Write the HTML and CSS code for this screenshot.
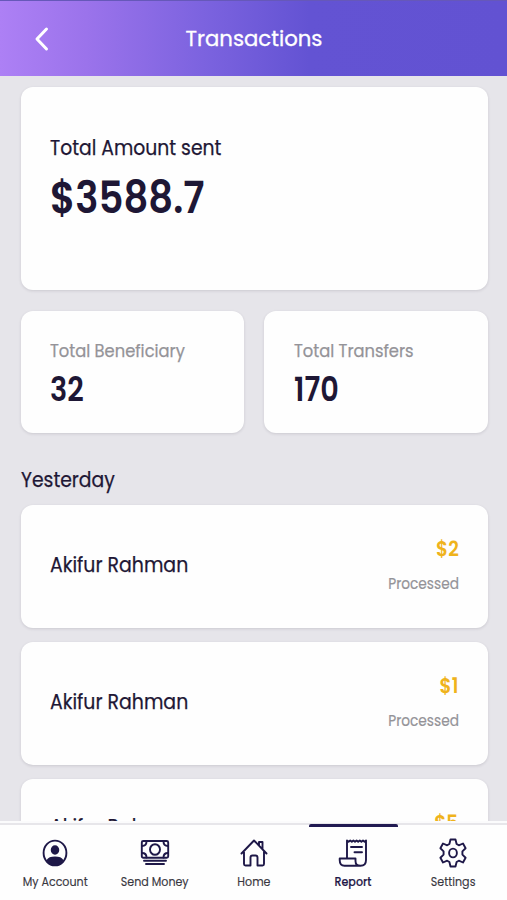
FILE: index.html
```html
<!DOCTYPE html>
<html lang="en">
<head>
  <meta charset="UTF-8" />
  <meta name="viewport" content="width=device-width, initial-scale=1.0"/>
  <title>Transactions</title>
  <link rel="stylesheet" href="styles.css">
</head>
<body>
  <header class="header">
    <button class="back" aria-label="Back">
      <svg width="16" height="26" viewBox="0 0 16 26"><path d="M12.5 3 L3 13 L12.5 23" /></svg>
    </button>
    <h1>Transactions</h1>
  </header>

  <main class="content">
    <section class="card total">
      <p class="total-label">Total Amount sent</p>
      <p class="total-amount">$3588.7</p>
    </section>

    <section class="stats">
      <div class="card stat">
        <p class="stat-label">Total Beneficiary</p>
        <p class="stat-value">32</p>
      </div>
      <div class="card stat">
        <p class="stat-label">Total Transfers</p>
        <p class="stat-value">170</p>
      </div>
    </section>

    <h2>Yesterday</h2>

    <div class="card transaction">
      <span class="name">Akifur Rahman</span>
      <div class="details">
        <span class="amount">$2</span>
        <span class="status">Processed</span>
      </div>
    </div>
    <div class="card transaction">
      <span class="name">Akifur Rahman</span>
      <div class="details">
        <span class="amount">$1</span>
        <span class="status">Processed</span>
      </div>
    </div>
    <div class="card transaction raised">
      <span class="name">Akifur Rahman</span>
      <div class="details">
        <span class="amount">$5</span>
        <span class="status">Processed</span>
      </div>
    </div>
  </main>

  <nav class="tabs">
    <a class="tab">
      <svg width="30" height="30" viewBox="0 0 30 30">
        <ellipse cx="15" cy="15" rx="11.4" ry="12.4" />
        <ellipse class="solid" cx="15" cy="12" rx="3.3" ry="3.8" />
        <path class="solid" d="M7.5 22.5 C9 19.8 12 19.5 15 19.5 C18 19.5 21 19.8 22.5 22.5 C20.5 26 18 27 15 27 C12 27 9.5 26 7.5 22.5 Z" />
      </svg>
      <span>My Account</span>
    </a>
    <a class="tab">
      <svg width="30" height="30" viewBox="0 0 30 30">
        <rect x="1.8" y="3" width="26.4" height="16.8" rx="1.5" />
        <ellipse cx="15" cy="11.5" rx="5" ry="5.3" />
        <path d="M2 8 C5 8 6.5 6.5 6.5 3.5 M23.5 3.5 C23.5 6.5 25 8 28 8 M2 15 C5 15 6.5 16.5 6.5 19.5 M23.5 19.5 C23.5 16.5 25 15 28 15" />
        <path d="M4 22.8 H26 M6 26 H24" />
      </svg>
      <span>Send Money</span>
    </a>
    <a class="tab">
      <svg width="30" height="30" viewBox="0 0 30 30">
        <path d="M2.5 15.5 L15 2.5 L27.5 15.5 M5 14 V26 Q5 27.5 6.5 27.5 H11.5 V19.5 Q11.5 17.5 13.5 17.5 H16.5 Q18.5 17.5 18.5 19.5 V27.5 H23.5 Q25 27.5 25 26 V14 M20 7.5 V4 H23.5 V11" />
      </svg>
      <span>Home</span>
    </a>
    <a class="tab active">
      <svg width="30" height="30" viewBox="0 0 30 30">
        <path d="M9 20 V2.5 L10.6 3.8 L12.2 2.5 L13.8 3.8 L15.4 2.5 L17 3.8 L18.6 2.5 L20.2 3.8 L21.8 2.5 L23.4 3.8 L25 2.5 L26.6 3.8 L28 2.5 V22 Q28 27.8 22.5 27.8 Q17.5 27.8 17.5 23 V20.5 H1.7 V22 Q1.7 27.8 6.5 27.8 H22.5" />
        <path d="M13 9 H24 M16.5 14.3 H24" />
      </svg>
      <span>Report</span>
    </a>
    <a class="tab">
      <svg width="30" height="30" viewBox="0 0 30 30">
        <path d="M12.5 1.5 H17.5 L18.6 6 L20.8 7.3 L25 5.5 L27.6 10.3 L24.4 13.4 V16.6 L27.6 19.7 L25 24.5 L20.8 22.7 L18.6 24 L17.5 28.5 H12.5 L11.4 24 L9.2 22.7 L5 24.5 L2.4 19.7 L5.6 16.6 V13.4 L2.4 10.3 L5 5.5 L9.2 7.3 L11.4 6 Z" />
        <ellipse cx="15" cy="15" rx="3.9" ry="4.4" />
      </svg>
      <span>Settings</span>
    </a>
  </nav>
</body>
</html>
```
FILE: styles.css
```css
* {
  box-sizing: border-box;
  margin: 0;
  padding: 0;
}

body {
  height: 900px;
  display: flex;
  flex-direction: column;
  overflow: hidden;
  background: #e6e5ea;
  color: #1e1735;
  font-family: 'Poppins', 'Inter', sans-serif;
}

.header {
  height: 76.4px;
  flex: none;
  display: grid;
  grid-template-columns: 80px 1fr 80px;
  align-items: center;
  background: linear-gradient(to right, #ad80f5 0%, #9b73eb 17%, #7c63df 40%, #6353d3 61%, #6252d2 100%);
  border-top: 1px solid #6658b9;
}

.header h1 {
  color: #fff;
  font-size: 22px;
  font-weight: 400;
  line-height: 30px;
  text-align: center;
  padding: 1px 0 0 1px;
  transform: scaleX(0.965);
  -webkit-text-stroke: 0.3px;
}

.back {
  justify-self: start;
  margin-left: 34px;
  height: 26px;
  background: none;
  border: none;
}

svg {
  display: block;
  fill: none;
  stroke: #1e1848;
  stroke-width: 1.9;
  stroke-linecap: round;
  stroke-linejoin: round;
}

.solid {
  fill: #1e1848;
}

.back svg {
  stroke: #fff;
  stroke-width: 3;
}

.content {
  flex: 1;
  min-height: 0;
  overflow: hidden;
  padding: 11px 19.3px 0 20.7px;
}

.card {
  background: #fefefe;
  border-radius: 12px;
  box-shadow: 0 1px 3px rgba(40, 35, 60, 0.14);
}

/* narrow the lettering a little */
.total-label,
.total-amount,
.stat-label,
.stat-value,
h2,
.name {
  transform: scaleX(0.915);
  transform-origin: left;
  white-space: nowrap;
}

.total {
  height: 202.6px;
  padding: 46px 29.5px;
}

.total-label {
  font-size: 20.5px;
  line-height: 30px;
  -webkit-text-stroke: 0.25px;
}

.total-amount {
  margin-top: 8px;
  font-size: 43.5px;
  font-weight: 600;
  line-height: 54px;
  transform: scaleX(0.89);
}

.stats {
  display: grid;
  grid-template-columns: 1fr 1fr;
  gap: 20px;
  margin-top: 21.4px;
}

.stat {
  height: 121.5px;
  padding: 27px 29.5px;
}

.stat-label {
  color: #949398;
  font-size: 17.5px;
  line-height: 26px;
  transform: scaleX(0.932);
  -webkit-text-stroke: 0.25px;
}

.stat-value {
  margin-top: 6px;
  font-size: 33px;
  font-weight: 600;
  line-height: 40px;
  transform: scaleX(0.87);
}

h2 {
  margin: 32px 0 10.5px;
  font-size: 20.5px;
  font-weight: 400;
  line-height: 30px;
  -webkit-text-stroke: 0.25px;
}

.transaction {
  height: 123px;
  margin-bottom: 13.7px;
  padding: 29.8px 29px 0 29.5px;
  display: flex;
  justify-content: space-between;
}

.name {
  margin-top: 15px;
  font-size: 20.5px;
  line-height: 30px;
  height: 30px;
  transform: scaleX(0.922);
  -webkit-text-stroke: 0.25px;
}

.raised .name {
  margin-top: 3px;
}

.details {
  display: flex;
  flex-direction: column;
  align-items: flex-end;
}

.amount {
  color: #efb31c;
  font-size: 21px;
  font-weight: 600;
  line-height: 28px;
  transform: scaleX(0.88);
  transform-origin: right;
}

.status {
  margin-top: 9px;
  color: #949398;
  font-size: 15.5px;
  line-height: 24px;
  transform: scaleX(0.885);
  transform-origin: right;
  -webkit-text-stroke: 0.2px;
}

.tabs {
  height: 79px;
  flex: none;
  display: grid;
  grid-template-columns: repeat(5, 1fr);
  padding: 0 4.5px 0 5.5px;
  background: #fefefe;
  box-shadow: inset 0 2px #fbfbfc, inset 0 4px #e7e6ea;
}

.tab {
  display: flex;
  flex-direction: column;
  align-items: center;
  margin: 3px 5px 0;
  padding-top: 14px;
  color: #39373f;
  font-size: 12px;
}

.tab span {
  margin-top: 5px;
  line-height: 18px;
  white-space: nowrap;
  transform: scaleX(0.925);
  -webkit-text-stroke: 0.15px;
}

.active {
  padding-top: 11px;
  border-top: 3px solid #211a52;
  border-radius: 2px;
  color: #1e1848;
  font-weight: 500;
}
```
